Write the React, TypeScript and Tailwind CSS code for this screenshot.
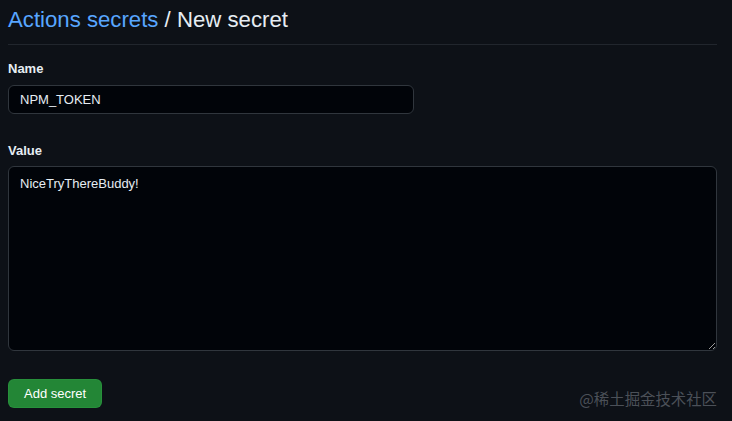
import React, { useState } from "react";

export default function App() {
  const [name, setName] = useState("NPM_TOKEN");
  const [value, setValue] = useState("NiceTryThereBuddy!");

  return (
    <div
      className="min-h-screen w-full bg-[#0d1117] pl-2 pr-[15px] pt-[5px] text-[#c9d1d9]"
      style={{ fontFamily: '"Liberation Sans", Arial, sans-serif' }}
    >
      <div className="border-b border-[#21262d] pb-[9px]">
        <h1 className="text-[22.2px] leading-[30px] font-normal text-[#e6edf3]">
          <a href="#" className="text-[#58a6ff]">
            Actions secrets
          </a>{" "}
          / New secret
        </h1>
      </div>

      <form className="flex flex-col" onSubmit={(e) => e.preventDefault()}>
        <label className="mt-[14px] text-[13px] leading-5 font-bold text-[#e6edf3]">Name</label>
        <input
          value={name}
          onChange={(e) => setName(e.target.value)}
          className="mt-[6px] h-[29px] w-[406px] rounded-md border border-[#30363d] bg-[#010409] px-[11px] text-[13px] text-[#e6edf3] outline-none"
        />

        <label className="mt-[27px] text-[13px] leading-5 font-bold text-[#e6edf3]">Value</label>
        <textarea
          value={value}
          onChange={(e) => setValue(e.target.value)}
          className="mt-[5px] h-[185px] w-full resize-y rounded-md border border-[#30363d] bg-[#010409] px-[11px] pt-[7px] text-[13px] leading-5 text-[#e6edf3] outline-none"
        />

        <div className="mt-[28px] flex items-start justify-between">
          <button
            type="submit"
            className="h-[29px] rounded-md border border-[#2ea043]/40 bg-[#238636] px-[15px] text-[13px] text-white"
          >
            Add secret
          </button>
          <span
            className="mt-[9px] text-[15.4px] leading-5 text-[#4b5058]"
            style={{ fontFamily: '"Noto Sans CJK SC", "Liberation Sans", sans-serif' }}
          >
            @稀土掘金技术社区
          </span>
        </div>
      </form>
    </div>
  );
}
